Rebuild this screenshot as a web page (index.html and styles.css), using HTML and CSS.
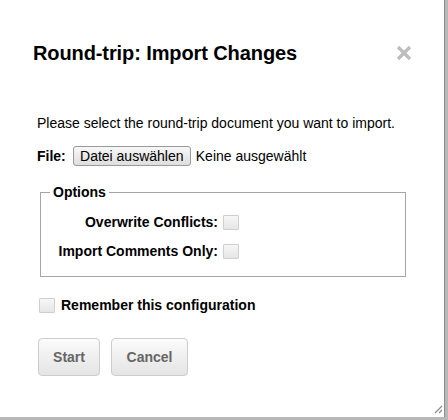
FILE: index.html
```html
<!DOCTYPE html>
<html>
<head>
<meta charset="utf-8">
<link rel="stylesheet" href="styles.css">
</head>
<body>
<div class="dialog">
  <div class="header">
    <h1 class="title">Round-trip: Import Changes</h1>
    <svg class="close" width="16" height="16" viewBox="0 0 16 16"><path d="M2 2L14 14M14 2L2 14" stroke="#bdbdbd" stroke-width="3.2" stroke-linecap="butt"/></svg>
  </div>
  <div class="content">
    <p class="intro">Please select the round-trip document you want to import.</p>
    <div class="file-row">
      <span class="file-label">File:</span>
      <span class="file-btn">Datei auswählen</span>
      <span class="file-name">Keine ausgewählt</span>
    </div>
    <fieldset class="options">
      <legend class="legend">Options</legend>
      <div class="opt-grid">
        <span class="opt-label">Overwrite Conflicts:</span><span class="check"></span>
        <span class="opt-label">Import Comments Only:</span><span class="check"></span>
      </div>
    </fieldset>
    <div class="remember">
      <span class="check"></span>
      <span class="remember-label">Remember this configuration</span>
    </div>
    <div class="actions">
      <span class="btn btn-start">Start</span>
      <span class="btn btn-cancel">Cancel</span>
    </div>
  </div>
  <svg class="grip" width="10" height="10" viewBox="0 0 10 10"><path d="M9 2L2 9M9 6L6 9" stroke="#8a8a8a" stroke-width="1.2"/></svg>
</div>
</body>
</html>
```
FILE: styles.css
```css
html, body {
  margin: 0;
  padding: 0;
}
body {
  width: 448px;
  height: 420px;
  background: #b8b8b8;
  font-family: "Liberation Sans", Arial, sans-serif;
  color: #000;
  overflow: hidden;
}
.dialog {
  position: relative;
  width: 445px;
  height: 417px;
  background: #fff;
  border-right: 1px solid #8c8c8c;
  box-sizing: border-box;
}
.header {
  display: flex;
  justify-content: space-between;
  align-items: center;
  padding: 41px 32px 0 33px;
}
.title {
  margin: 0;
  font-size: 20px;
  line-height: 24px;
  font-weight: bold;
  letter-spacing: -0.1px;
}
.close {
  display: block;
  margin-top: 0;
}
.content {
  padding: 50px 0 0 37px;
  font-size: 14px;
  line-height: 16px;
}
.intro {
  margin: 0;
}
.file-row {
  display: flex;
  align-items: center;
  height: 20px;
  margin-top: 15px;
  line-height: 20px;
}
.file-label {
  font-weight: bold;
  margin-right: 7px;
}
.file-btn {
  display: block;
  box-sizing: border-box;
  width: 118px;
  height: 20px;
  line-height: 18px;
  text-align: center;
  border: 1px solid #9a9a9a;
  border-radius: 3px;
  background: linear-gradient(#f7f7f7, #dedede);
}
.file-name {
  margin-left: 5px;
}
.options {
  margin: 18px 0 0 3px;
  width: 366px;
  box-sizing: border-box;
  padding: 14px 0 17px 0;
  border: 1px solid #a6a6a6;
  min-width: 0;
}
.legend {
  margin-left: 9px;
  padding: 0 3px;
  font-weight: bold;
  line-height: 16px;
}
.opt-grid {
  display: grid;
  grid-template-columns: 177px 16px;
  column-gap: 5px;
  row-gap: 13px;
  align-items: center;
}
.opt-label {
  font-weight: bold;
  text-align: right;
}
.check {
  display: block;
  box-sizing: border-box;
  width: 16px;
  height: 15px;
  border: 1px solid #cfcfcf;
  border-radius: 1px;
  background: linear-gradient(#f6f6f6, #e6e6e6);
}
.remember {
  display: flex;
  align-items: center;
  margin: 20px 0 0 2px;
}
.remember-label {
  font-weight: bold;
  margin-left: 6px;
}
.actions {
  display: flex;
  gap: 11px;
  margin: 25px 0 0 1px;
}
.btn {
  display: flex;
  align-items: center;
  justify-content: center;
  box-sizing: border-box;
  height: 38px;
  border: 1px solid #cdcdcd;
  border-radius: 4px;
  background: linear-gradient(#fbfbfb, #e4e4e4);
  color: #666;
  font-weight: bold;
  font-size: 14px;
}
.btn-start {
  width: 62px;
}
.btn-cancel {
  width: 77px;
}
.grip {
  position: absolute;
  right: 1px;
  bottom: 3px;
}
```
